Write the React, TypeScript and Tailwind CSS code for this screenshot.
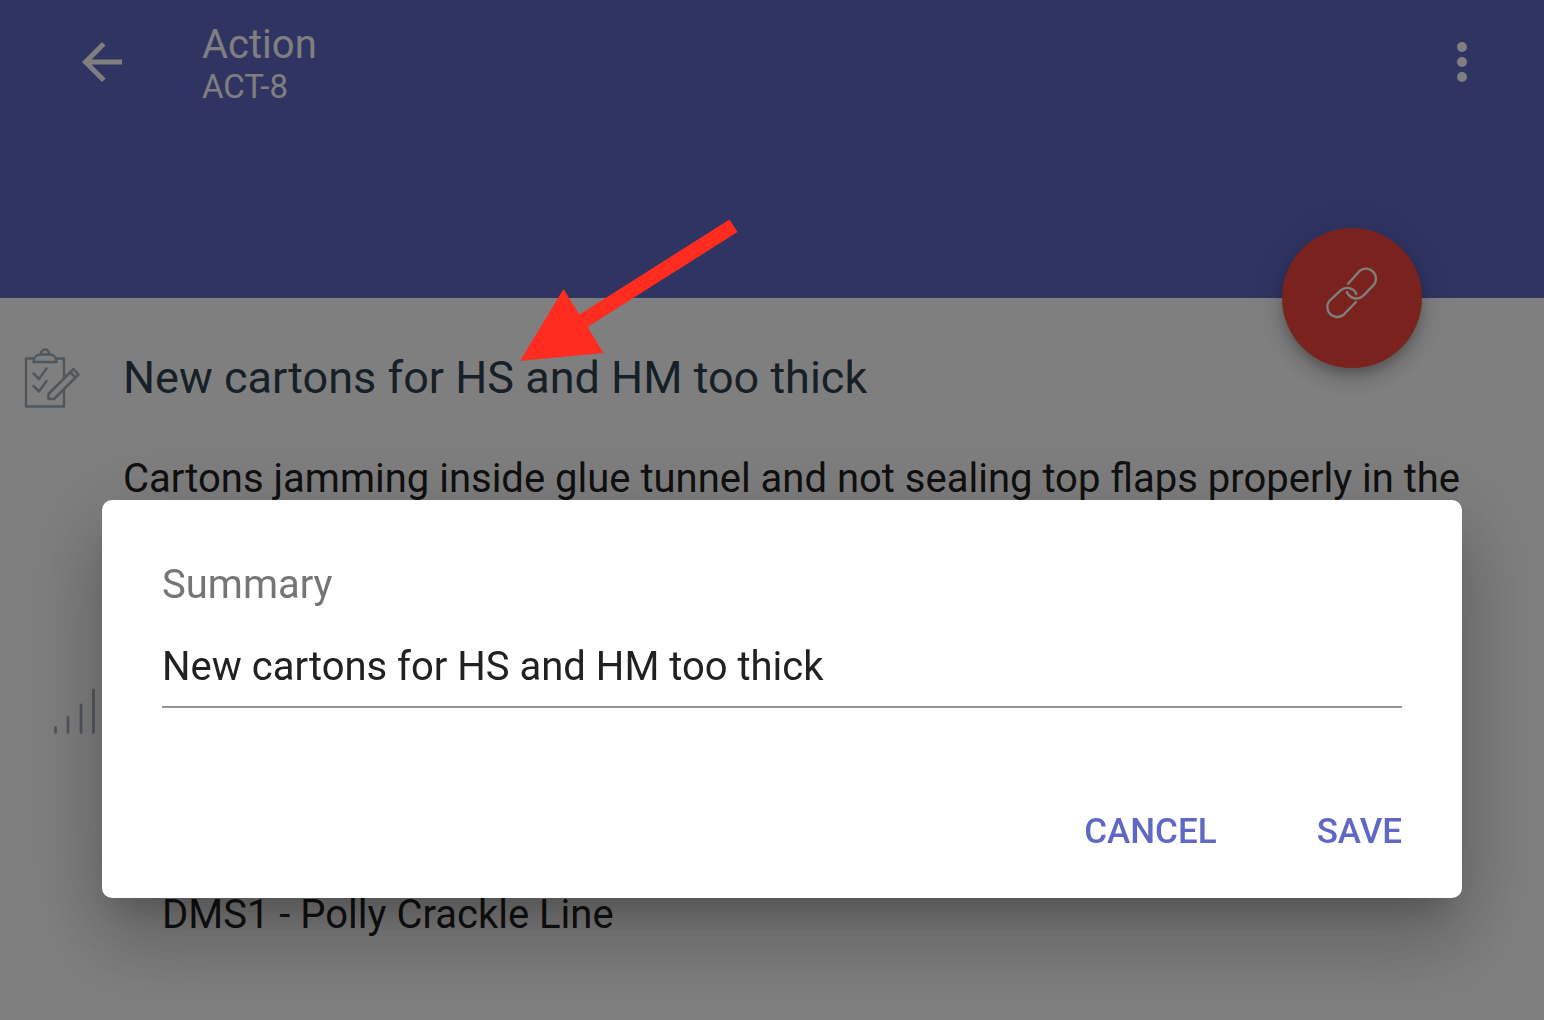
import { useState } from "react";

function BackIcon() {
  return (
    <svg viewBox="0 0 24 24" className="size-[60px] fill-white" aria-hidden="true">
      <path d="M20 11H7.83l5.59-5.59L12 4l-8 8 8 8 1.41-1.41L7.83 13H20v-2z" />
    </svg>
  );
}

function MoreIcon() {
  return (
    <svg viewBox="0 0 24 24" className="size-[60px] fill-white" aria-hidden="true">
      <circle cx="12" cy="6" r="2" />
      <circle cx="12" cy="12" r="2" />
      <circle cx="12" cy="18" r="2" />
    </svg>
  );
}

function LinkIcon() {
  return (
    <svg
      viewBox="192 168 162 162"
      className="size-[54px] fill-none stroke-white stroke-[7]"
      strokeLinecap="round"
      aria-hidden="true"
    >
      <path d="M261 221 L297 182 A30 30 0 0 1 339 224 L307 257 A30 30 0 0 1 258 246" />
      <path d="M285 276 L247 315 A30 30 0 0 1 205 273 L239 241 A30 30 0 0 1 286 252" />
    </svg>
  );
}

function ClipboardIcon() {
  return (
    <svg
      viewBox="24 348 56 60"
      className="h-[60px] w-14 fill-none stroke-[#a0aeb8] stroke-[2.5]"
      strokeLinejoin="round"
      strokeLinecap="round"
      aria-hidden="true"
    >
      <path d="M33 358.500H26V406.500H64V358.500H57" />
      <path d="M33.500 362H56.500C56.500 357 53 354.500 49 354.500H41C37 354.500 33.500 357 33.500 362Z" />
      <path d="M41 354C41 348 49 348 49 354" />
      <path d="M33.500 373.500L39 379L46.500 368.500" />
      <path d="M33.500 386L39 391.500L46.500 381" />
      <path d="M48.500 399V394L73.500 369L78.500 374.500L54 399Z" className="fill-white" />
      <path d="M70.500 372.500L75.500 377.500" />
    </svg>
  );
}

function SignalIcon() {
  return (
    <svg
      viewBox="0 0 42 46"
      className="h-[46px] w-[42px] fill-none stroke-[#a0aeb8] stroke-[2.8]"
      strokeLinecap="round"
      aria-hidden="true"
    >
      <path d="M1.500 39.500V44.500M14 29.500V44.500M27 17V44.500M39.500 2V44.500" />
    </svg>
  );
}

function PointerArrow() {
  return (
    <svg
      viewBox="520 219 218 143"
      className="pointer-events-none absolute left-[520px] top-[219px] z-20 h-[143px] w-[218px] fill-[#ff2c1f]"
      aria-hidden="true"
    >
      <polygon points="520,361 563.5,289 579.5,314.5 729.500,219.500 737.500,232 587.500,327 603.500,353" />
    </svg>
  );
}

export default function App() {
  const [summary, setSummary] = useState("New cartons for HS and HM too thick");

  return (
    <div className="relative min-h-screen overflow-hidden bg-white font-['Roboto',sans-serif] text-[40px] leading-[48px] text-[#212121]">
      <header className="relative flex h-[298px] items-start bg-[#6068c6] pl-[72px] pr-[52px] pt-6 text-white">
        <button aria-label="Back" className="mt-2">
          <BackIcon />
        </button>
        <div className="ml-[70px] flex-1">
          <h1 className="leading-[42px]">Action</h1>
          <p className="text-[33px] leading-[42px]">ACT-8</p>
        </div>
        <button aria-label="More options" className="mt-2">
          <MoreIcon />
        </button>
        <button
          aria-label="Link"
          className="absolute -bottom-[70px] right-[122px] flex size-[140px] items-center justify-center rounded-full bg-[#f5463c] pb-2.5 shadow-[0_6px_10px_-2px_rgba(0,0,0,0.2),0_12px_20px_rgba(0,0,0,0.14),0_2px_36px_rgba(0,0,0,0.12)]"
        >
          <LinkIcon />
        </button>
      </header>

      <main className="px-6 pt-[50px]">
        <div className="flex items-center gap-[43px]">
          <ClipboardIcon />
          <h2 className="text-[45px] text-[#30404f]">New cartons for HS and HM too thick</h2>
        </div>
        <p className="ml-[99px] mt-[47px] whitespace-nowrap">
          Cartons jamming inside glue tunnel and not sealing top flaps properly in the
        </p>
        <div className="ml-[30px] mt-[185px]">
          <SignalIcon />
        </div>
        <p className="ml-[138px] mt-[157px]">DMS1 - Polly Crackle Line</p>
      </main>

      <div className="fixed inset-0 z-10 flex items-end bg-black/50 pb-[122px] pl-[102px] pr-[82px]">
        <form
          role="dialog"
          aria-label="Summary"
          onSubmit={(e) => e.preventDefault()}
          className="flex-1 rounded-[10px] bg-white px-[60px] pb-[42px] pt-[61px] shadow-[0_22px_30px_-14px_rgba(0,0,0,0.2),0_48px_76px_6px_rgba(0,0,0,0.14),0_18px_92px_16px_rgba(0,0,0,0.12)]"
        >
          <label htmlFor="summary" className="block text-[#757575]">
            Summary
          </label>
          <input
            id="summary"
            type="text"
            value={summary}
            onChange={(e) => setSummary(e.target.value)}
            className="mt-[33px] block h-[66px] w-full border-b-2 border-[#949494] pb-4 outline-none"
          />
          <div className="mt-[100px] flex justify-end gap-[100px] text-[35px] font-medium text-[#6068c6]">
            <button type="button">CANCEL</button>
            <button type="submit">SAVE</button>
          </div>
        </form>
      </div>

      <PointerArrow />
    </div>
  );
}
